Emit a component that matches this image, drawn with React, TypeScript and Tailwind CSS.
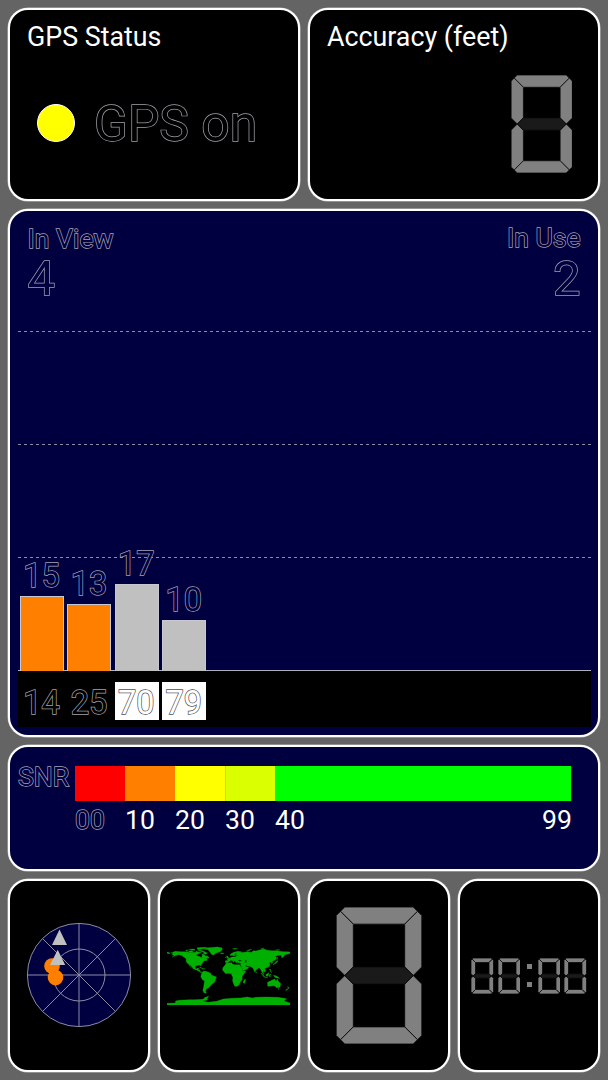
import React from 'react';

interface PanelProps {
  className?: string;
  children?: React.ReactNode;
}

interface Satellite {
  id: number;
  snr: number;
  height: number;
  inUse: boolean;
}

const satellites: Satellite[] = [
  { id: 14, snr: 15, height: 75, inUse: true },
  { id: 25, snr: 13, height: 67, inUse: true },
  { id: 70, snr: 17, height: 87, inUse: false },
  { id: 79, snr: 10, height: 51, inUse: false },
];

// the fill is painted over the stroke, so only the outer contour stays visible
const outline = '[paint-order:stroke_fill] [-webkit-text-stroke-width:1.4px]';
const onBlack = `${outline} text-black [-webkit-text-stroke-color:#a3a3ac]`;
const onNavy = `${outline} text-[#000040] [-webkit-text-stroke-color:#a3a3b4]`;
const onWhite = `${outline} text-white [-webkit-text-stroke-color:#505056]`;

const Panel: React.FC<PanelProps> = ({ className = '', children }) => (
  <section
    className={`rounded-[20px] border-2 border-white shadow-[0_0_0_0.5px_#ffffff99] overflow-hidden ${className}`}
  >
    {children}
  </section>
);

const Digit: React.FC<{ className: string; gap: number }> = ({ className, gap }) => (
  <svg viewBox="0 0 10 16" className={className} stroke="#08080c" strokeWidth={gap}>
    <g fill="#808080">
      <path d="M.5 .5L1 0H9L9.5 .5L8 2H2Z" />
      <path d="M0 1L.5 .5L2 2V7L1 8L0 7Z" />
      <path d="M10 1L9.5 .5L8 2V7L9 8L10 7Z" />
      <path d="M0 15L.5 15.5L2 14V9L1 8L0 9Z" />
      <path d="M10 15L9.5 15.5L8 14V9L9 8L10 9Z" />
      <path d="M.5 15.5L1 16H9L9.5 15.5L8 14H2Z" />
    </g>
    <path fill="#1a1a1a" d="M1 8L2 7H8L9 8L8 9H2Z" />
  </svg>
);

const GridRow = () => (
  <div className="h-[113px] shrink-0">
    <svg className="block h-px w-full" viewBox="0 0 573 1" preserveAspectRatio="none">
      <line x1="0" y1=".5" x2="573" y2=".5" stroke="#8c8ca6" strokeDasharray="3 3" />
    </svg>
  </div>
);

const SignalChart = () => (
  <Panel className="relative h-[528px] shrink-0 bg-[#000040] pl-[7.5px] pr-[7.5px]">
    <div className="flex h-[120px] justify-between px-[10px] pt-3">
      <div className="pt-px">
        <div className={`h-[30px] text-[26.6px] leading-[30px] ${onNavy}`}>In View</div>
        <div className={`h-[50px] text-[49px] leading-[49px] ${onNavy}`}>4</div>
      </div>
      <div className="text-right">
        <div className={`h-[30px] text-[26.6px] leading-[30px] ${onNavy}`}>In Use</div>
        <div className={`h-[50px] text-[49px] leading-[51px] ${onNavy}`}>2</div>
      </div>
    </div>
    <GridRow />
    <GridRow />
    <GridRow />
    <div className="h-[57px] border-t border-[#b0b0bc] bg-black" />

    {/* bars lie over the grid */}
    <div className="absolute bottom-[15px] left-[10px] flex items-end gap-[3.4px]">
      {satellites.map((sat) => (
        <div key={sat.id} className="flex w-[44px] flex-col items-center text-[32.5px]">
          <div className={`pr-px leading-[38px] ${onNavy}`}>{sat.snr}</div>
          <div
            className={`mt-px w-full border border-b-0 border-[#c8c8d0] ${sat.inUse ? 'bg-[#ff8000]' : 'bg-[#c0c0c0]'}`}
            style={{ height: sat.height }}
          />
          <div
            className={`mt-[11px] h-[38px] w-full pr-px text-center leading-[43px] ${sat.inUse ? onBlack : `bg-white ${onWhite}`}`}
          >
            {sat.id}
          </div>
        </div>
      ))}
    </div>
  </Panel>
);

const SnrScale = () => (
  <Panel className="flex h-[126px] shrink-0 bg-[#000040] pl-[8px] pr-[27px] pt-[19px] text-[26.6px]">
    <div className={`-mt-[4px] w-[57px] leading-[30px] ${onNavy}`}>SNR</div>
    <div className="flex-1">
      <div className="flex h-[35px]">
        <div className="w-[50px] bg-[#ff0000]" />
        <div className="w-[50px] bg-[#ff8000]" />
        <div className="w-[50px] bg-[#ffff00]" />
        <div className="w-[50px] border-l border-[#d8d800] bg-[#d9ff00]" />
        <div className="flex-1 bg-[#00ff00]" />
      </div>
      <div className="mt-[4px] flex leading-[30px] text-white">
        <div className={`w-[50px] ${onNavy}`}>00</div>
        <div className="w-[50px]">10</div>
        <div className="w-[50px]">20</div>
        <div className="w-[50px]">30</div>
        <div className="flex-1">40</div>
        <div className="-mr-px">99</div>
      </div>
    </div>
  </Panel>
);

const SkyView = () => (
  <svg viewBox="-53 -53 106 106" className="h-[106px] w-[106px]" fill="none" stroke="#8c8ca6" strokeWidth="1">
    <circle r="51.6" fill="#000040" />
    <circle r="26" />
    <path d="M-51.6 0H51.6M0 -51.6V51.6M-36.5 -36.5L36.5 36.5M-36.5 36.5L36.5 -36.5" />
    <g stroke="none" fill="#ff8000">
      <circle cx="-27" cy="-9" r="7.8" />
      <circle cx="-23.5" cy="2.6" r="7.8" />
    </g>
    <g stroke="none" fill="#c0c0c0">
      <path d="M-19.5 -45.5L-12 -30H-27Z" />
      <path d="M-21.3 -25.3L-13.8 -10H-29Z" />
    </g>
  </svg>
);

// longitude / latitude outlines, north up
const WorldMap = () => (
  <svg viewBox="-180 -90 360 180" preserveAspectRatio="none" className="h-[60px] w-[123px]">
    <g transform="scale(1 -1)" fill="#00b000" stroke="#00b000" strokeWidth="1">
      <path d="M-168 66L-156 71L-141 70L-128 70L-115 68L-108 68L-96 68L-94 72L-87 68L-82 69L-82 66L-87 64L-94 61L-94 58L-88 56L-82 55L-80 51L-78 55L-77 58L-78 62L-72 62L-68 58L-62 57L-56 52L-60 50L-66 50L-61 46L-66 43L-70 43L-75 39L-76 35L-81 31L-80 26L-82 28L-85 30L-91 29L-97 27L-97 22L-94 18L-90 21L-87 21L-89 16L-84 15L-83 10L-77 9L-80 7L-86 11L-92 14L-97 16L-105 20L-107 25L-113 31L-115 30L-110 23L-117 33L-122 37L-124 43L-124 49L-131 54L-138 59L-146 61L-152 59L-160 56L-165 54L-158 58L-165 61L-161 64Z" />
      <path d="M-90 74L-80 74L-68 69L-62 66L-66 62L-73 64L-72 68L-84 72ZM-118 72L-105 73L-105 69L-115 69ZM-125 74L-117 76L-124 71ZM-92 82L-70 83L-62 82L-76 78L-90 76ZM-115 77L-100 78L-98 74L-110 75Z" />
      <path d="M-73 78L-60 82L-32 84L-18 81L-20 74L-25 70L-38 65L-43 60L-50 62L-54 69L-60 76ZM-24 66L-14 66L-15 64L-22 64Z" />
      <path d="M-85 22L-77 21L-74 19L-69 19L-72 18L-77 19L-82 23Z" />
      <path d="M-77 8L-72 12L-62 10L-52 5L-50 0L-35 -6L-38 -13L-41 -22L-48 -27L-54 -34L-58 -38L-65 -42L-67 -48L-65 -55L-72 -53L-75 -46L-73 -37L-70 -18L-76 -14L-81 -6L-80 0Z" />
      <path d="M-6 36L10 37L11 33L20 31L32 31L35 27L43 12L51 11L40 -3L40 -15L35 -20L32 -28L26 -34L18 -34L12 -18L13 -7L9 0L9 4L-2 5L-8 4L-17 14L-17 21L-10 30ZM49 -12L50 -16L47 -25L43 -24L44 -17Z" />
      <path d="M-9 43L-9 37L-2 37L3 42L8 44L12 42L16 38L17 41L13 45L19 41L23 36L26 40L27 37L36 36L35 31L39 21L44 13L55 18L60 23L52 25L48 30L56 27L66 25L72 20L77 8L80 14L89 22L94 17L98 8L103 1L101 12L106 9L109 12L106 20L116 23L122 30L119 37L125 39L126 34L129 36L128 40L140 48L140 54L136 55L145 59L155 59L156 51L163 57L164 61L178 64L180 65V69L170 70L160 70L140 73L128 73L113 74L104 78L90 75L80 72L72 73L68 68L55 69L44 68L34 66L40 69L28 71L15 68L5 62L6 58L11 59L16 56L22 61L24 66L18 63L19 60L24 59L30 60L22 57L20 54L10 54L3 51L-4 48L-1 44ZM28 45L34 45L41 42L31 41ZM48 45L52 45L53 37L49 38Z" fillRule="evenodd" />
      <path d="M-5 50L1 51L-2 56L-5 58L-5 54ZM-10 52L-6 55L-9 54ZM12 79L26 80L18 77ZM52 71L60 76L68 77L56 71ZM95 79L104 81L96 77ZM138 75L150 76L146 74ZM-180 69L-170 66L-174 64L-180 65Z" />
      <path d="M130 31L136 36L141 42L145 43L140 36L135 33ZM142 46L143 54L144 49ZM120 18L122 18L126 7L123 11ZM95 5L98 4L106 -5L104 -6ZM109 1L117 7L118 2L115 -4L110 -3ZM106 -6L115 -8L114 -9L106 -7ZM119 1L125 2L121 -2L123 -5L120 -5ZM131 -1L141 -3L150 -10L143 -9L138 -8ZM80 10L82 7L80 6Z" />
      <path d="M114 -22L122 -18L130 -14L136 -12L137 -16L141 -17L142 -11L146 -19L153 -26L150 -37L141 -38L136 -34L131 -32L124 -33L115 -34ZM145 -41L148 -41L147 -44ZM173 -35L178 -38L175 -41ZM172 -41L167 -46L170 -46L174 -42Z" />
      <path d="M-180 -90V-85L-155 -84L-155 -78L-145 -76L-115 -74L-100 -74L-75 -73L-68 -67L-58 -64L-62 -70L-62 -75L-76 -78L-60 -82L-35 -79L-15 -72L10 -70L35 -69L55 -66L70 -69L80 -67L110 -66L145 -67L170 -71L163 -78L180 -84V-90Z" />
    </g>
  </svg>
);

const Clock = () => (
  <div className="flex items-center">
    <Digit className="h-[36px] w-[22.5px]" gap={0.35} />
    <Digit className="ml-[4.2px] h-[36px] w-[22.5px]" gap={0.35} />
    <div className="mx-[6.3px] flex flex-col gap-[13px]">
      <span className="h-[5px] w-[5px] bg-[#808080]" />
      <span className="h-[5px] w-[5px] bg-[#808080]" />
    </div>
    <Digit className="h-[36px] w-[22.5px]" gap={0.35} />
    <Digit className="ml-[4.2px] h-[36px] w-[22.5px]" gap={0.35} />
  </div>
);

const App = () => {
  return (
    <main className="flex h-[1080px] w-[608px] flex-col gap-2 bg-[#646464] p-2 font-[Roboto,sans-serif] text-white">
      <div className="grid h-[193px] shrink-0 grid-cols-2 gap-2">
        <Panel className="bg-black px-[17px] pt-3">
          <h1 className="text-[26.8px] leading-[30px]">GPS Status</h1>
          <div className="mt-[41px] flex items-center pl-[10px]">
            <span className="h-[38px] w-[38px] rounded-full border border-white bg-[#ffff00]" />
            <span className={`ml-[19px] mt-[2px] text-[49.8px] leading-[58px] ${onBlack}`}>GPS on</span>
          </div>
        </Panel>
        <Panel className="bg-black pl-[17px] pr-[26px] pt-3">
          <h1 className="text-[26.8px] leading-[30px]">Accuracy (feet)</h1>
          <div className="mt-[22.5px] flex justify-end">
            <Digit className="h-[98px] w-[61.5px]" gap={0.12} />
          </div>
        </Panel>
      </div>

      <SignalChart />
      <SnrScale />

      <div className="grid h-[193px] shrink-0 grid-cols-4 gap-2">
        <Panel className="flex items-center justify-center bg-black pb-px">
          <SkyView />
        </Panel>
        <Panel className="flex items-center justify-center bg-black pb-px pr-px">
          <WorldMap />
        </Panel>
        <Panel className="flex items-center justify-center bg-black">
          <Digit className="h-[137px] w-[86px]" gap={0.1} />
        </Panel>
        <Panel className="flex items-center justify-center bg-black">
          <Clock />
        </Panel>
      </div>
    </main>
  );
};

export default App;
